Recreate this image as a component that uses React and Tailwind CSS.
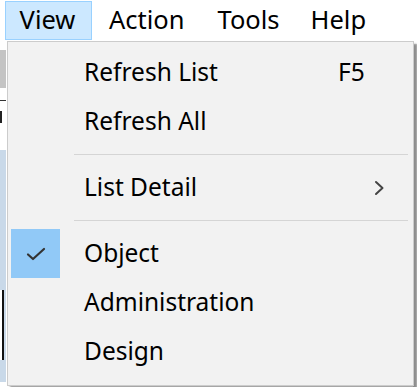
import React from "react";

const font = { fontFamily: '"Noto Sans", "Open Sans", sans-serif' };

function Item({ label, right, checked, sub }) {
  return (
    <div className="flex h-[49px] items-center text-[24.5px] leading-none text-black">
      <div className="flex h-full w-[66px] pl-[3px]">
        {checked && (
          <div className="flex h-[49px] w-[49px] items-center justify-center bg-[#91c9f7]">
            <svg width="20" height="14" viewBox="0 0 20 14" fill="none">
              <path d="M2 7.5 L7 12 L18 2" stroke="#333" strokeWidth="2.2" strokeLinecap="round" strokeLinejoin="round" />
            </svg>
          </div>
        )}
      </div>
      <span className="flex-1 pl-[10px]">{label}</span>
      <div className="flex w-[75px] items-center">
        {right && <span>{right}</span>}
        {sub && (
          <svg className="ml-[35px]" width="12" height="16" viewBox="0 0 12 16" fill="none">
            <path d="M3 2 L9.5 8 L3 14" stroke="#444" strokeWidth="2" strokeLinecap="round" strokeLinejoin="round" />
          </svg>
        )}
      </div>
    </div>
  );
}

function Sep() {
  return (
    <div className="flex h-[17px] items-center pl-[66px] pr-[5px]">
      <div className="h-px w-full bg-[#d5d5d5]" />
    </div>
  );
}

export default function App() {
  return (
    <div className="relative flex h-[387px] w-[417px] flex-col overflow-hidden bg-white" style={font}>
      {/* menu bar */}
      <div className="flex h-[40px] shrink-0 items-center text-[25.5px] leading-none text-black">
        <div className="ml-[5px] flex h-[39px] w-[87px] items-center justify-center border border-[#99d1ff] bg-[#cce8ff] pr-[2px]">
          View
        </div>
        <div className="ml-[17px]">Action</div>
        <div className="ml-[33px]">Tools</div>
        <div className="ml-[31px]">Help</div>
      </div>

      {/* underlying window content */}
      <div className="flex flex-1">
        <div className="flex w-[6px] flex-col">
          <div className="mt-[10px] h-[38px] bg-[#c4c4c4]" />
          <div className="mt-[12px] h-px bg-[#333]" />
          <div className="mt-[10px] h-[12px] w-[2px] bg-[#222]" />
          <div className="mt-[27px] flex h-[232px] flex-col bg-[#c9d9e9]">
            <div className="mt-[140px] h-[70px] w-[4px] border-r-2 border-[#111] bg-white" />
          </div>
        </div>
        <div className="flex-1" />
        <div className="mt-[4px] w-[4px] bg-[#d9d9d9]" />
      </div>

      {/* dropdown menu */}
      <div className="absolute left-[7px] top-[41px] h-[345px] w-[407px] shadow-[3px_3px_2px_rgba(0,0,0,0.35)]">
        <div className="flex h-full w-full flex-col border border-[#cccccc] bg-[#f2f2f2] pt-[6px]">
          <Item label="Refresh List" right="F5" />
          <Item label="Refresh All" />
          <Sep />
          <Item label="List Detail" sub />
          <Sep />
          <Item label="Object" checked />
          <Item label="Administration" />
          <Item label="Design" />
        </div>
      </div>
    </div>
  );
}
